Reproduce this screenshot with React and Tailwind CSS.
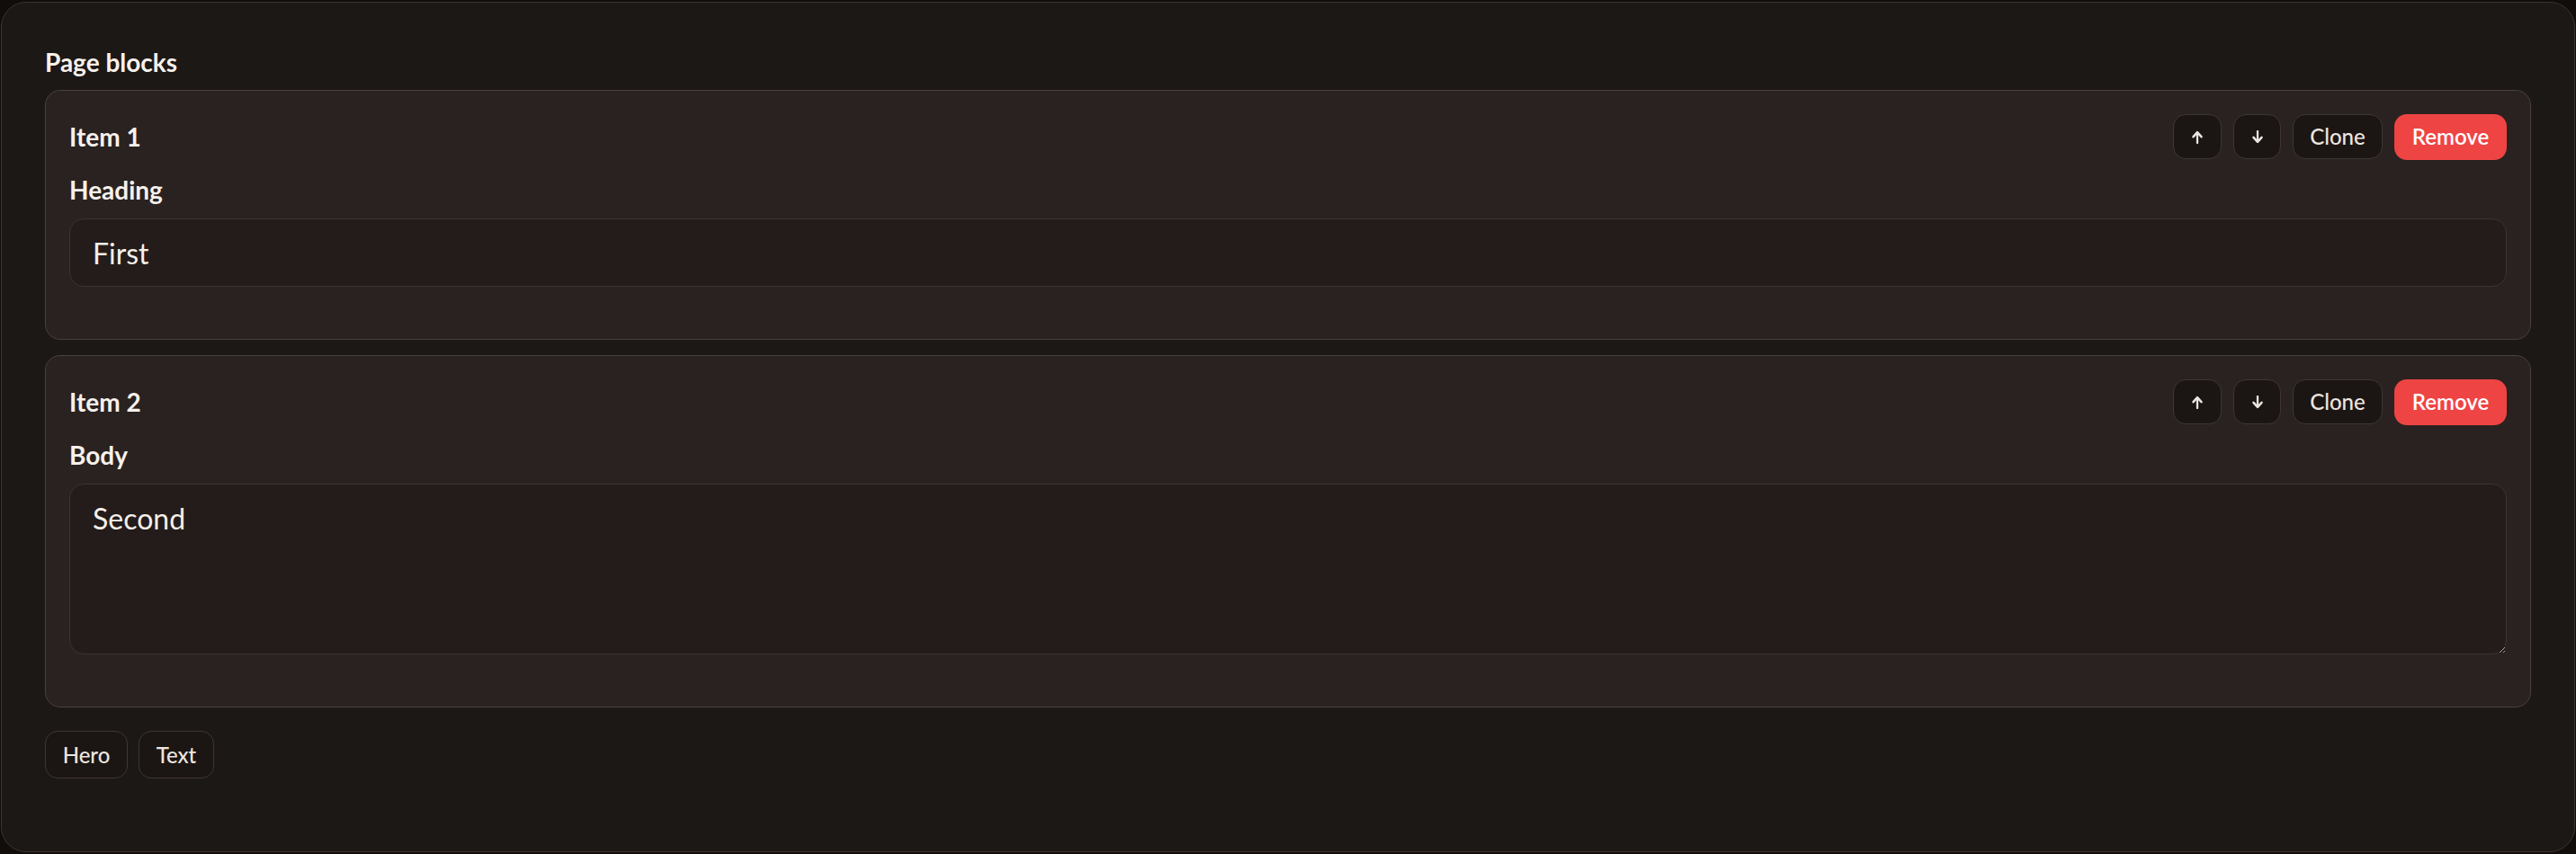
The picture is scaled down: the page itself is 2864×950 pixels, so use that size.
import React from "react";

const font = { fontFamily: "Lato, 'Noto Sans', sans-serif" };

function Arrow({ down }) {
  return (
    <svg width="14" height="15" viewBox="0 0 14 15" fill="none" className={down ? "rotate-180" : ""}>
      <path d="M7 14V3" stroke="currentColor" strokeWidth="2.3" strokeLinecap="round" />
      <path d="M2.5 7.2L7 2.2l4.5 5" stroke="currentColor" strokeWidth="2.5" strokeLinecap="round" strokeLinejoin="round" />
    </svg>
  );
}

function GhostButton({ children, className = "" }) {
  return (
    <button
      type="button"
      className={`flex items-center justify-center rounded-[14px] border border-[#3f3633] bg-[#1b1613] text-[24px] font-medium text-[#ece5e0] ${className}`}
    >
      {children}
    </button>
  );
}

function ItemCard({ title, label, children }) {
  return (
    <div className="rounded-[17px] border border-[#4a403d] bg-[#2a2220] p-[26px]">
      <div className="flex h-[50px] items-center justify-between">
        <div className="text-[28px] font-bold text-[#f7f1ec]">{title}</div>
        <div className="flex h-full items-center gap-[13px]">
          <GhostButton className="h-[50px] w-[54px]">
            <Arrow />
          </GhostButton>
          <GhostButton className="h-[50px] w-[53px]">
            <Arrow down />
          </GhostButton>
          <GhostButton className="h-[50px] w-[100px]">Clone</GhostButton>
          <button
            type="button"
            className="flex h-[51px] w-[125px] items-center justify-center rounded-[14px] bg-[#ef4444] text-[24px] font-semibold text-white"
          >
            Remove
          </button>
        </div>
      </div>
      <div className="mt-[13px] text-[28px] font-bold leading-[42px] text-[#f7f1ec]">{label}</div>
      <div className="mt-[11px] mb-[32px]">{children}</div>
    </div>
  );
}

export default function App() {
  return (
    <div className="h-[950px] w-full bg-[#100d0b] px-px pt-[2px]" style={font}>
      <div className="flex h-[946px] flex-col rounded-[28px] border border-[#3d3432] bg-[#1c1815] px-[48px] pt-[46px]">
        <div className="mb-[11px] text-[28px] font-bold leading-[40px] text-[#f7f1ec]">Page blocks</div>
        <div className="flex flex-col gap-[17px]">
          <ItemCard title="Item 1" label="Heading">
            <input
              defaultValue="First"
              className="h-[76px] w-full rounded-[16px] border border-[#3d3432] bg-[#231c1a] px-[25px] text-[32px] text-[#f5efe9] outline-none"
            />
          </ItemCard>
          <ItemCard title="Item 2" label="Body">
            <textarea
              defaultValue="Second"
              className="block h-[190px] w-full resize-y rounded-[16px] border border-[#3d3432] bg-[#231c1a] px-[25px] pt-[14px] text-[32px] leading-normal text-[#f5efe9] outline-none [color-scheme:dark]"
            />
          </ItemCard>
        </div>
        <div className="mt-[26px] flex gap-[12px]">
          <GhostButton className="h-[53px] w-[92px]">Hero</GhostButton>
          <GhostButton className="h-[53px] w-[84px]">Text</GhostButton>
        </div>
      </div>
    </div>
  );
}
